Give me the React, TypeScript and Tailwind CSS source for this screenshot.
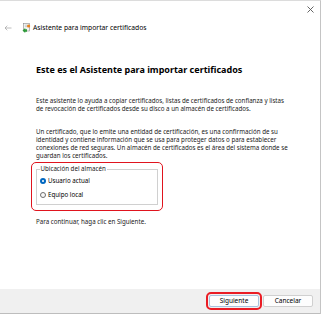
import React from "react";

const font = "font-['Segoe_UI','Noto_Sans',sans-serif]";

function CertIcon() {
  return (
    <svg width="9" height="10" viewBox="0 0 9 10">
      <rect x="1.5" y="0.5" width="6" height="7.5" fill="#f4f4f4" stroke="#8a8a8a" strokeWidth="0.6" />
      <line x1="2.8" y1="2.2" x2="6.2" y2="2.2" stroke="#9aa" strokeWidth="0.5" />
      <line x1="2.8" y1="3.6" x2="6.2" y2="3.6" stroke="#9aa" strokeWidth="0.5" />
      <circle cx="6.6" cy="3" r="1.6" fill="#e8821e" />
      <path d="M0.5 7.5 L3.2 5 L3.2 6.3 L5 6.3 L5 8.7 L3.2 8.7 L3.2 10 Z" fill="#2e9b3a" />
    </svg>
  );
}

export default function App() {
  return (
    <div
      className={`w-[321px] h-[314px] bg-white border-t border-t-[#dcdcdc] border-r border-r-[#c4c4c4] flex flex-col text-black ${font}`}
    >
      {/* close row */}
      <div className="h-[15px] flex justify-end items-center pr-[6px] shrink-0">
        <svg width="7" height="7" viewBox="0 0 7 7" className="mt-[1px]">
          <path d="M0.5 0.5 L6.5 6.5 M6.5 0.5 L0.5 6.5" stroke="#555" strokeWidth="0.9" />
        </svg>
      </div>
      {/* title row */}
      <div className="h-[12px] mt-[6px] flex items-center shrink-0">
        <svg width="8" height="6" viewBox="0 0 8 6" className="ml-[4px]">
          <path d="M7.5 3 H1 M3.3 0.7 L1 3 L3.3 5.3" stroke="#a0a0a0" strokeWidth="0.7" fill="none" />
        </svg>
        <div className="ml-[10px] flex items-center">
          <CertIcon />
        </div>
        <span className="ml-[2px] text-[6.75px] leading-[12px]">Asistente para importar certificados</span>
      </div>
      {/* content */}
      <div className="flex-1 pl-[36px] pr-[31px] flex flex-col">
        <div className="mt-[29px] text-[9px] leading-[14px] font-bold">
          Este es el Asistente para importar certificados
        </div>
        <p className="mt-[20px] text-[6.2px] leading-[7.7px] text-[#1a1a1a]">
          Este asistente lo ayuda a copiar certificados, listas de certificados de confianza y listas de revocación de
          certificados desde su disco a un almacén de certificados.
        </p>
        <p className="mt-[16px] text-[6.2px] leading-[7.7px] text-[#1a1a1a]">
          Un certificado, que lo emite una entidad de certificación, es una confirmación de su identidad y contiene
          información que se usa para proteger datos o para establecer conexiones de red seguras. Un almacén de
          certificados es el área del sistema donde se guardan los certificados.
        </p>
        <div className="mt-[2.5px] ml-[-5px] w-[132px] h-[49px] border-[1.5px] border-[#e0141e] rounded-[5px] pl-[3.5px] pr-[4.5px] pt-[2.5px] shrink-0">
          <fieldset className="border border-[#d0d0d0] h-[40px] px-[3px]">
            <legend className="text-[6.2px] leading-[8px] px-[1px] text-[#1a1a1a]">Ubicación del almacén</legend>
            <div className="flex items-center mt-[3px] h-[10px]">
              <span className="w-[6.5px] h-[6.5px] rounded-full bg-[#0067c0] flex items-center justify-center">
                <span className="w-[2.5px] h-[2.5px] rounded-full bg-white" />
              </span>
              <span className="ml-[2px] text-[6.2px] leading-[8px]">Usuario actual</span>
            </div>
            <div className="flex items-center mt-[4px] h-[10px]">
              <span className="w-[6.5px] h-[6.5px] rounded-full border-[0.7px] border-[#6e6e6e] bg-[#f8f8f8]" />
              <span className="ml-[2px] text-[6.2px] leading-[8px]">Equipo local</span>
            </div>
          </fieldset>
        </div>
        <p className="mt-[7px] text-[6.2px] leading-[8px] text-[#1a1a1a]">
          Para continuar, haga clic en Siguiente.
        </p>
      </div>
      {/* footer */}
      <div className="h-[25px] bg-[#f0f0f0] border-b border-b-[#bdbdbd] flex items-center justify-end pr-[7px] shrink-0">
        <div className="flex p-[1px] border-2 border-[#ea1c24] rounded-[5px] bg-[#f0f0f0]">
          <div className="flex items-center justify-center w-[50px] h-[12px] bg-[#fdfdfd] border border-[#a9c2de] rounded-[2px] text-[6.5px] leading-[10px] text-black">
            Siguiente
          </div>
        </div>
        <div className="flex items-center justify-center ml-[1px] w-[50px] h-[12px] bg-[#fdfdfd] border border-[#d0d0d0] rounded-[2px] text-[6.5px] leading-[10px] text-black">
          Cancelar
        </div>
      </div>
    </div>
  );
}
